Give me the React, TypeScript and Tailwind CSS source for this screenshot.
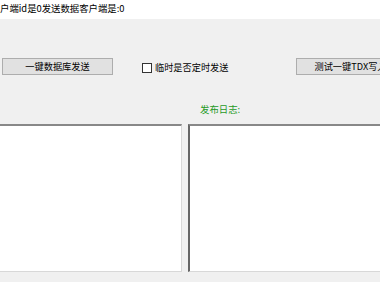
export default function App() {
  return (
    <div
      className="w-[380px] h-[282px] overflow-hidden bg-[#f0f0f0] text-black flex flex-col"
      style={{ fontFamily: '"Noto Sans CJK SC", "Noto Sans", sans-serif' }}
    >
      {/* status strip */}
      <div className="h-[19px] shrink-0 bg-white flex items-center text-[9.4px] leading-none pb-[2px] whitespace-nowrap">
        户端id是0发送数据客户端是:0
      </div>

      {/* action row */}
      <div className="h-[57px] shrink-0 flex items-end pb-[1px] pl-[2px] whitespace-nowrap">
        <button className="shrink-0 w-[111px] h-[17px] bg-[#e1e1e1] border border-[#adadad] text-[9.2px] leading-none flex items-center justify-center">
          一键数据库发送
        </button>
        <label className="shrink-0 ml-[29px] mb-[2px] flex items-center gap-[3px] text-[9.2px] leading-none">
          <span className="w-[10px] h-[10px] border border-[#333] bg-white" />
          临时是否定时发送
        </label>
        <button className="shrink-0 ml-[67px] w-[100px] h-[17px] bg-[#e1e1e1] border border-[#adadad] text-[9.2px] leading-none flex items-center pl-[18px]">
          测试一键TDX写入
        </button>
      </div>

      {/* log label */}
      <div className="h-[48px] shrink-0 pl-[200px] pt-[29px] text-[9.4px] leading-none text-[#1f9a1f]">
        发布日志:
      </div>

      {/* text areas */}
      <div className="h-[148px] shrink-0 flex gap-[6px]">
        <div className="shrink-0 w-[182px] bg-white border-t-2 border-r border-b border-t-[#888] border-r-[#d8d8d8] border-b-[#d8d8d8]" />
        <div className="flex-1 bg-white border-t-2 border-l-2 border-b border-t-[#888] border-l-[#666] border-b-[#d8d8d8]" />
      </div>
    </div>
  );
}
